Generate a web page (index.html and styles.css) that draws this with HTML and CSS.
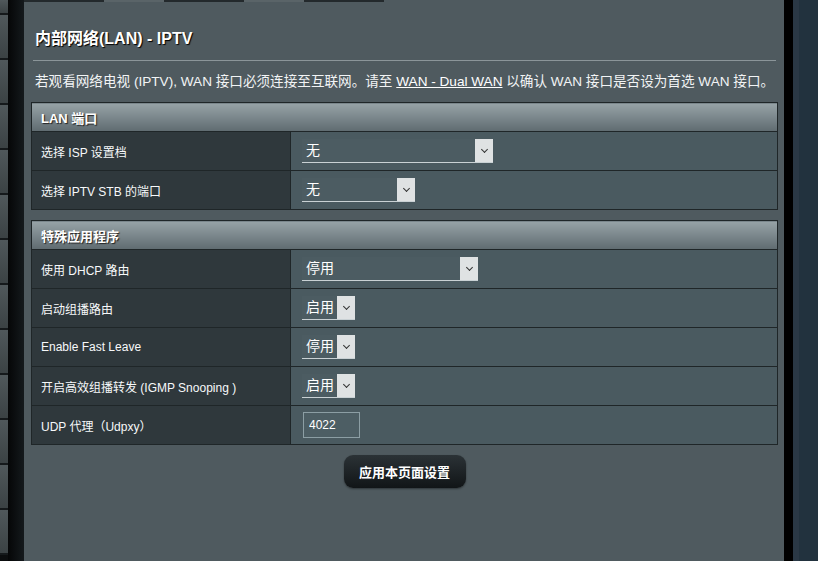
FILE: index.html
```html
<!DOCTYPE html>
<html lang="zh-Hans">
<head>
    <meta charset="utf-8">
    <title>内部网络(LAN) - IPTV</title>
    <link rel="stylesheet" href="styles.css">
</head>
<body>
    <div class="menu">
        <div class="menu-item"></div>
        <div class="menu-item"></div>
        <div class="menu-item"></div>
        <div class="menu-item"></div>
        <div class="menu-item"></div>
        <div class="menu-item"></div>
        <div class="menu-item"></div>
        <div class="menu-item"></div>
        <div class="menu-item"></div>
        <div class="menu-item"></div>
        <div class="menu-item"></div>
        <div class="menu-item"></div>
        <div class="menu-item"></div>
    </div>
    <div class="gutter"></div>
    <div class="panel">
        <div class="tabs">
            <span class="tab dark"></span><span class="tab"></span><span class="tab dark"></span><span class="tab"></span><span class="tab dark"></span>
        </div>
        <h1 class="title">内部网络(LAN) - IPTV</h1>
        <div class="divider"></div>
        <p class="desc">若观看网络电视 (IPTV), WAN 接口必须连接至互联网。请至 <a href="#">WAN - Dual WAN</a> 以确认 WAN 接口是否设为首选 WAN 接口。</p>

        <table class="form-table">
            <thead>
                <tr><th colspan="2">LAN 端口</th></tr>
            </thead>
            <tbody>
                <tr>
                    <td class="label">选择 ISP 设置档</td>
                    <td><span class="select" style="width: 191px"><span class="value">无</span><span class="arrow"></span></span></td>
                </tr>
                <tr>
                    <td class="label">选择 IPTV STB 的端口</td>
                    <td><span class="select" style="width: 113px"><span class="value">无</span><span class="arrow"></span></span></td>
                </tr>
            </tbody>
        </table>

        <table class="form-table">
            <thead>
                <tr><th colspan="2">特殊应用程序</th></tr>
            </thead>
            <tbody>
                <tr>
                    <td class="label">使用 DHCP 路由</td>
                    <td><span class="select" style="width: 176px"><span class="value">停用</span><span class="arrow"></span></span></td>
                </tr>
                <tr>
                    <td class="label">启动组播路由</td>
                    <td><span class="select" style="width: 53px"><span class="value">启用</span><span class="arrow"></span></span></td>
                </tr>
                <tr>
                    <td class="label">Enable Fast Leave</td>
                    <td><span class="select" style="width: 53px"><span class="value">停用</span><span class="arrow"></span></span></td>
                </tr>
                <tr>
                    <td class="label">开启高效组播转发 (IGMP Snooping )</td>
                    <td><span class="select" style="width: 53px"><span class="value">启用</span><span class="arrow"></span></span></td>
                </tr>
                <tr>
                    <td class="label">UDP 代理（Udpxy）</td>
                    <td><input class="text-input" type="text" value="4022"></td>
                </tr>
            </tbody>
        </table>

        <div class="actions">
            <button class="btn" type="button">应用本页面设置</button>
        </div>
    </div>
    <div class="edge"></div>
    <div class="side"></div>
</body>
</html>
```

FILE: styles.css
```css
html, body {
    margin: 0;
    height: 100%;
    background: #0b0d0e;
}

body {
    display: flex;
    font-family: "Liberation Sans", "Noto Sans CJK SC", sans-serif;
    font-size: 13px;
    color: #fff;
    overflow: hidden;
}

.menu {
    width: 8px;
    flex: none;
}

.menu-item {
    height: 43px;
    background: linear-gradient(to bottom, #50585b, #3b4244);
    border-bottom: 2px solid #15191b;
}

.menu-item:first-child {
    height: 13px;
}

.gutter {
    width: 16px;
    flex: none;
    background: linear-gradient(to right, #050607, #14191c);
}

.panel {
    width: 760px;
    flex: none;
    background: #4f5a5f;
    padding: 0 6px 0 7px;
    box-sizing: border-box;
}

.tabs {
    display: flex;
    height: 2px;
    margin: 0 -6px 0 -7px;
}

.tab {
    width: 60px;
    background: #5a6468;
}

.tab.dark {
    width: 80px;
    background: #23292c;
}

.title {
    margin: 26px 0 0 4px;
    font-size: 16px;
    font-weight: bold;
    line-height: 22px;
    text-shadow: 1px 1px 1px #000;
}

.divider {
    height: 1px;
    margin: 10px 2px 0 2px;
    background: #8b9599;
}

.desc {
    margin: 12px 0 0 4px;
    line-height: 18px;
    font-size: 13.6px;
    color: #f2f4f5;
    white-space: nowrap;
}

.desc a {
    color: #fff;
    text-decoration: underline;
}

.form-table {
    width: 747px;
    border-collapse: collapse;
    margin-top: 10px;
    border: 1px solid #1f2628;
}

.form-table:first-of-type {
    margin-top: 11px;
}

.form-table th {
    height: 28px;
    padding: 0 0 0 9px;
    text-align: left;
    font-size: 13px;
    font-weight: bold;
    text-shadow: 1px 1px 1px #222;
    background: linear-gradient(to bottom, #97a3a7, #5f6b70);
    border-bottom: 1px solid #1f2628;
}

.form-table td {
    height: 38px;
    padding: 0 0 0 11px;
    background: #4a5a60;
    border-top: 1px solid #1f2628;
}

.form-table td.label {
    width: 249px;
    padding-left: 9px;
    background: #2f383c;
    border-right: 1px solid #1f2628;
    font-size: 12px;
    color: #f7f9fa;
}

.select {
    display: inline-flex;
    height: 24px;
    vertical-align: middle;
    border-bottom: 1px solid #c9d1d4;
    box-sizing: border-box;
    background: #4c5c62;
}

.select .value {
    flex: 1;
    padding-left: 4px;
    line-height: 23px;
    font-size: 14px;
}

.select .arrow {
    width: 18px;
    background: #dfe2e3;
    position: relative;
}

.select .arrow::after {
    content: "";
    position: absolute;
    left: 7px;
    top: 8px;
    width: 4px;
    height: 4px;
    border-right: 1px solid #333;
    border-bottom: 1px solid #333;
    transform: rotate(45deg);
}

.text-input {
    width: 57px;
    height: 26px;
    margin-left: 1px;
    padding: 0 5px;
    box-sizing: border-box;
    border: 1px solid #8c9ea4;
    background: #4d5e64;
    color: #fff;
    font-family: "Liberation Sans", sans-serif;
    font-size: 12px;
    outline: none;
}

.actions {
    display: flex;
    justify-content: center;
    margin-top: 10px;
}

.btn {
    width: 122px;
    height: 33px;
    border: none;
    border-radius: 9px;
    background: linear-gradient(to bottom, #2b3236, #111517);
    color: #fff;
    font-family: "Noto Sans CJK SC", sans-serif;
    font-size: 13px;
    font-weight: bold;
    box-shadow: 0 1px 2px rgba(0, 0, 0, 0.4);
    cursor: pointer;
}

.edge {
    width: 9px;
    flex: none;
    background: #000;
}

.side {
    flex: 1;
    background: linear-gradient(to right, #2a3845 0, #2a3845 6px, #22323e 6px);
}
```
